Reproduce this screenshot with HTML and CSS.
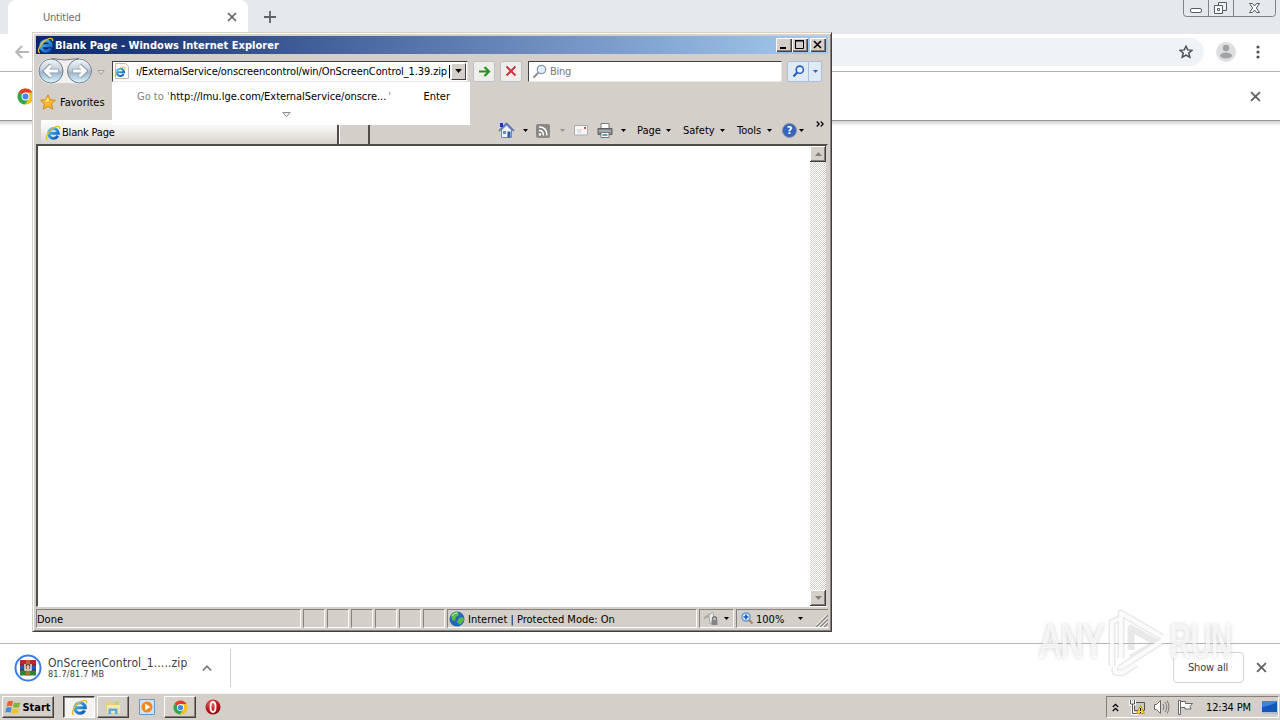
FILE: index.html
```
<!DOCTYPE html>
<html lang="en">
<head>
<meta charset="UTF-8">
<meta name="viewport" content="width=device-width, initial-scale=1.0">
<title>Untitled</title>
<link rel="stylesheet" href="styles.css">
</head>
<body>
<svg class="defs" width="0" height="0">
  <defs>
    <linearGradient id="blue" x1="0" y1="0" x2="1" y2="1">
      <stop offset="0" stop-color="#58c8f8"/><stop offset="1" stop-color="#0a51b4"/>
    </linearGradient>
    <linearGradient id="orb" x1="0" y1="0" x2="0" y2="1">
      <stop offset="0" stop-color="#f4f7fa"/><stop offset=".45" stop-color="#c2d0de"/><stop offset=".55" stop-color="#9db6cc"/><stop offset="1" stop-color="#d8f6ff"/>
    </linearGradient>
    <radialGradient id="red" cx=".4" cy=".3" r=".8">
      <stop offset="0" stop-color="#f0645c"/><stop offset=".6" stop-color="#b8141a"/><stop offset="1" stop-color="#6e0808"/>
    </radialGradient>
    <symbol id="ie" viewBox="0 0 16 16">
      <path d="M12.800 10.800A4.900 4.900 0 1 1 13.400 8.300H5" fill="none" stroke="url(#blue)" stroke-width="2.900"/>
      <path d="M2.800 15C-.6 14 2.600 6.800 8 3.200c4-2.600 7.400-2.600 6.600.8" fill="none" stroke="#e9b824" stroke-width="1.300"/>
    </symbol>
    <symbol id="chrome" viewBox="0 0 16 16">
      <circle cx="8" cy="8" r="7.500" fill="#fbc116"/>
      <path d="M8 8L1.500 4.300A7.500 7.500 0 0 1 14.500 4.300H8z" fill="#e33b2e"/>
      <path d="M8 8L1.500 4.300A7.500 7.500 0 0 0 7.300 15.500L11.200 9.800z" fill="#2da94f"/>
      <circle cx="8" cy="8" r="3.700" fill="#fff"/><circle cx="8" cy="8" r="2.800" fill="#4285f4"/>
    </symbol>
    <symbol id="close" viewBox="0 0 10 10">
      <path d="M1 1l8 8M9 1L1 9" stroke="#5f6368" stroke-width="1.700"/>
    </symbol>
    <symbol id="down" viewBox="0 0 5 3"><path d="M0 0h5L2.500 3z" fill="currentColor"/></symbol>
  </defs>
</svg>

<div class="desktop">
  <div class="chrome">
    <div class="tabstrip">
      <div class="chrome-tab">
        <span class="tab-title">Untitled</span>
        <svg width="10" height="10"><use href="#close"/></svg>
      </div>
      <svg class="new-tab" width="12" height="12" viewBox="0 0 12 12"><path d="M6 0v12M0 6h12" stroke="#5f6368" stroke-width="1.800"/></svg>
      <svg class="win-buttons" width="94" height="18" viewBox="0 0 94 18">
        <path d="M.5 0V13.500Q.5 16.500 3.500 16.500H89.500Q92.500 16.500 92.500 13.500V0M25.500 0V16.500M50.500 0V16.500" fill="none" stroke="#7e8489"/>
        <rect x="7.500" y="8.500" width="11" height="4" rx="1.500" fill="#fff" stroke="#555b62"/>
        <path d="M35.500 2.500h8v8h-8z" fill="#eef0f2" stroke="#555b62"/>
        <path d="M31.500 5.500h8v8h-8zM34.500 8.500h2v2h-2z" fill="#fff" stroke="#555b62"/>
        <path d="M66.500 3.500h3l2 2.500 2-2.500h3l-3.200 4.500 3.200 4.500h-3l-2-2.500-2 2.500h-3l3.200-4.500z" fill="#fff" stroke="#555b62"/>
      </svg>
    </div>
    <div class="toolbar">
      <svg class="back" width="14" height="14" viewBox="0 0 14 14"><path d="M14 7H1.500M7 1L1.200 7 7 13" fill="none" stroke="#b4b6b8" stroke-width="1.900"/></svg>
      <div class="omnibox">
        <svg width="14" height="14" viewBox="0 0 14 14"><path d="M7 1.200l1.700 3.700 4.300.4-3.200 2.700 1 4.200L7 10.200l-3.800 2 1-4.200L1 5.300l4.300-.4z" fill="none" stroke="#4c5055" stroke-width="1.500"/></svg>
      </div>
      <svg class="avatar" width="20" height="20" viewBox="0 0 20 20"><circle cx="10" cy="10" r="10" fill="#dedfe1"/><circle cx="10" cy="6" r="3.200" fill="#a1a2a4"/><ellipse cx="10" cy="13.500" rx="6" ry="3" fill="#a1a2a4"/></svg>
      <svg class="dots" width="4" height="14" viewBox="0 0 4 14" fill="#505459"><circle cx="2" cy="2" r="1.600"/><circle cx="2" cy="7" r="1.600"/><circle cx="2" cy="12" r="1.600"/></svg>
    </div>
    <div class="infobar">
      <svg width="17" height="17"><use href="#chrome"/></svg>
      <svg width="11" height="11"><use href="#close"/></svg>
    </div>
    <div class="page"></div>
    <div class="shelf">
      <svg class="rar" width="28" height="28" viewBox="0 0 28 28">
        <circle cx="14" cy="14" r="12.500" fill="#fff" stroke="#3b7ae8" stroke-width="2"/>
        <path d="M6 6h16v5H6z" fill="#c22336"/><path d="M6 11.500h16v4.500H6z" fill="#2f51b8"/><path d="M6 16.500h16v5H6z" fill="#298534"/>
        <path d="M12 6h4v15.500h-4z" fill="#b36b2c"/><path d="M6 11.200h16M6 16.200h16" stroke="#222"/>
        <path d="M11 10v6h6v-6M14 11v4" fill="none" stroke="#eee" stroke-width="1.400"/>
      </svg>
      <div class="download">
        <div class="file">OnScreenControl_1.....zip</div>
        <div class="size">81.7/81.7 MB</div>
      </div>
      <svg class="chevron" width="10" height="6" viewBox="0 0 10 6"><path d="M.8 5.500L5 1.200l4.200 4.300" fill="none" stroke="#73777b" stroke-width="1.600"/></svg>
      <div class="divider"></div>
      <button class="show-all"><span>Show all</span></button>
      <svg class="shelf-close" width="11" height="11"><use href="#close"/></svg>
    </div>
  </div>

  <div class="taskbar">
    <div class="start">
      <svg width="17" height="17" viewBox="0 0 16 16">
        <path d="M2.500 2.500q3-1.500 5 0L6.500 7q-2.500-1.500-5 0z" fill="#e8602c"/><path d="M8.500 3q3 1.500 6 0l-1.300 4.500q-3 1.500-5.700 0z" fill="#7db83a"/>
        <path d="M1.200 8.200q3-1.500 5 0l-1 4.800q-2.500-1.500-5 0z" fill="#3e8ed8"/><path d="M7.200 8.700q3 1.500 6 0L12 13.200q-3 1.500-6 0z" fill="#f4c02a"/>
      </svg>
      <b>Start</b>
    </div>
    <div class="task active"><svg width="17" height="17"><use href="#ie"/></svg></div>
    <div class="task">
      <svg width="16" height="16" viewBox="0 0 16 16"><path d="M1 3h5l1 1h7v9H1z" fill="#e9cf72"/><path d="M2 6h13v8H2z" fill="#f7e9a6"/><path d="M3.500 15V9.500h9V15h-2.500v-3H6v3z" fill="#58aee0"/><path d="M10 2h4v4h-4z" fill="#b9d47c"/></svg>
    </div>
    <div class="quick media">
      <svg width="16" height="16" viewBox="0 0 16 16"><path d="M.5.5h15v15H.5z" fill="#cfe3f6" stroke="#5a9bd8"/><circle cx="8" cy="8" r="5.500" fill="#f08a1c"/><path d="M6.200 4.800v6.400L11.400 8z" fill="#fff"/></svg>
    </div>
    <div class="task last"><svg width="15" height="15"><use href="#chrome"/></svg></div>
    <div class="quick">
      <svg width="16" height="16" viewBox="0 0 16 16"><circle cx="8" cy="8" r="7.500" fill="url(#red)"/><ellipse cx="8" cy="8" rx="2.500" ry="5" fill="none" stroke="#fff" stroke-width="1.800"/></svg>
    </div>
    <div class="tray">
      <svg width="7" height="9" viewBox="0 0 7 9"><path d="M.8 4l2.700-2.700L6.200 4M.8 8l2.700-2.700L6.200 8" fill="none" stroke="#000" stroke-width="1.300"/></svg>
      <svg class="net" width="16" height="16" viewBox="0 0 16 16"><path d="M5.500 3.500h10v8h-10z" fill="#c8c8c4" stroke="#555"/><path d="M1.500 1v4h4V1M3.500 5v9.500h6" fill="none" stroke="#fff" stroke-width="3"/><path d="M1.500 1v4h4V1M3.500 5v9.500h5" fill="none" stroke="#555"/><path d="M11.500 6.500l4 8h-8z" fill="#ffe21c" stroke="#b89a00"/><path d="M11.500 9v3M11.500 13v1" stroke="#000"/></svg>
      <svg class="sound" width="17" height="16" viewBox="0 0 17 16"><path d="M1.500 5.500h2l4-4v13l-4-4h-2z" fill="#fff" stroke="#666"/><path d="M10 5q2 3 0 6M12 3q3.500 5 0 10M14 1.500q4 6.500 0 13" fill="none" stroke="#777"/></svg>
      <svg class="flag" width="17" height="16" viewBox="0 0 17 16"><path d="M1.500 1.500h2v14h-2zM3.500 2.500h5v2h7l-2.500 3 1 2.500h-6v-1.500h-4.500z" fill="#fff" stroke="#666"/></svg>
      <span class="clock">12:34 PM</span>
      <svg class="show-desk" width="16" height="13" viewBox="0 0 16 13"><path d="M0 0h15v11H0z" fill="#1857b5"/><path d="M0 6Q8 5 15 1V0H0z" fill="#3c83dc"/><path d="M0 12h16" stroke="#8faed6"/></svg>
    </div>
  </div>

  <div class="ie-window">
    <div class="titlebar">
      <svg width="17" height="17"><use href="#ie"/></svg>
      <b>Blank Page - Windows Internet Explorer</b>
      <div class="caption-buttons">
        <svg width="16" height="14" viewBox="0 0 16 14"><path d="M4 10h6" stroke="#000" stroke-width="2"/></svg>
        <svg width="16" height="14" viewBox="0 0 16 14"><path d="M3.500 3h8v7.500h-8zM3 2.500h9" fill="none" stroke="#000"/></svg>
        <svg class="x" width="16" height="14" viewBox="0 0 16 14"><path d="M4 3l7 7M11 3l-7 7" stroke="#000" stroke-width="1.600"/></svg>
      </div>
    </div>

    <div class="navbar">
      <svg class="nav-orbs" width="56" height="29" viewBox="0 0 56 29">
        <path d="M14 1q14 4 28 0a13 13 0 0 1 0 26q-14-2-28 0a13 13 0 0 1 0-26z" fill="#f1f0ee"/><path d="M14 1.500q14 3 28 0" fill="none" stroke="#777d86"/>
        <circle cx="14" cy="14" r="12" fill="url(#orb)" stroke="#737f8b"/><circle cx="42.500" cy="14" r="12" fill="url(#orb)" stroke="#737f8b"/>
        <path d="M21.500 14H8.500M14 8l-6 6 6 6M35.500 14h13M42.500 8l6 6-6 6" fill="none" stroke="#8797a6" stroke-width="4.400"/>
        <path d="M21 14H8.500M14 8.500L8.500 14l5.500 5.500M36 14h12M42.500 8.500L48 14l-5.500 5.500" fill="none" stroke="#fff" stroke-width="3"/>
      </svg>
      <svg class="recent" width="8" height="5" viewBox="0 0 8 5"><path d="M.8.5h6.400L4 4.300z" fill="#ddd" stroke="#a5a19b"/></svg>
      <div class="address">
        <svg width="16" height="16" viewBox="0 0 16 16"><path d="M1.500.5h10l3 3v12h-13z" fill="#fff" stroke="#bcbcbc"/><use href="#ie" x="0" y="3" width="12" height="12"/></svg>
        <div class="url"><span>ı/ExternalService/onscreencontrol/win/OnScreenControl_1.39.zip</span></div>
        <div class="drop"><svg width="7" height="4"><use href="#down"/></svg></div>
      </div>
      <div class="nav-button"><svg width="13" height="11" viewBox="0 0 13 11"><path d="M1 5.500h10M6.500 1l4.500 4.500L6.500 10" fill="none" stroke="#22941f" stroke-width="2.200"/></svg></div>
      <div class="nav-button"><svg width="12" height="12" viewBox="0 0 12 12"><path d="M1.500 1.500l9 9M10.500 1.500l-9 9" stroke="#c43a44" stroke-width="2"/></svg></div>
      <div class="search">
        <svg width="15" height="15" viewBox="0 0 15 15"><circle cx="9.500" cy="5.500" r="4.200" fill="#e4f1fa" stroke="#8a99a8" stroke-width="1.300"/><path d="M6.300 8.700L1.500 13.500" stroke="#8a8f95" stroke-width="2"/></svg>
        <span>Bing</span>
      </div>
      <div class="search-go">
        <div><svg width="13" height="13" viewBox="0 0 13 13"><circle cx="7.800" cy="4.700" r="3.600" fill="#e9f3ff" stroke="#2560c8" stroke-width="1.600"/><path d="M5.300 7.300L1.500 11.500" stroke="#2560c8" stroke-width="2.200"/></svg></div>
        <div class="go-more"><svg width="5" height="3"><use href="#down"/></svg></div>
      </div>
    </div>

    <div class="favbar">
      <svg width="16" height="16" viewBox="0 0 16 16"><path d="M8 .8l2.200 4.900 5.200.5-3.900 3.600 1.200 5.300L8 12.400l-4.700 2.700 1.200-5.300L.6 6.200l5.200-.5z" fill="#fbb92d" stroke="#d08a1a"/><path d="M8 3l1.200 4L5 8z" fill="#ffe58c"/></svg>
      <span>Favorites</span>
    </div>

    <div class="tabbar">
      <div class="ie-tab">
        <svg width="16" height="16"><use href="#ie"/></svg>
        <span>Blank Page</span>
      </div>
      <div class="ie-newtab"></div>
      <div class="commands">
        <svg class="home" width="17" height="17" viewBox="0 0 17 17"><path d="M3.500 8v7.500h10V8l-5-5z" fill="#edf2fb" stroke="#7288b8"/><path d="M1 9l7.500-7.500L16 9" fill="none" stroke="#5572b4" stroke-width="1.600"/><path d="M2 1h3v4H2z" fill="#2432b4"/><path d="M9.500 9.500h3v6h-3z" fill="#2e5a9f"/><path d="M5 9h3v3H5z" fill="#6b8acb"/></svg>
        <svg class="arrow a1" width="5" height="3"><use href="#down"/></svg>
        <svg class="rss" width="14" height="14" viewBox="0 0 14 14"><rect width="14" height="14" rx="2" fill="#8b8885"/><circle cx="4" cy="10.500" r="1.300" fill="#fff"/><path d="M3 6.500q4.500 0 4.500 5M3 3q8 0 8 8.500" fill="none" stroke="#fff" stroke-width="1.500"/></svg>
        <svg class="arrow a2" width="5" height="3"><use href="#down"/></svg>
        <svg class="mail" width="14" height="11" viewBox="0 0 14 11"><path d="M.5.5h13v9.500H.5z" fill="#f8f8f8" stroke="#aaa"/><path d="M3 5h5M3 7h4" stroke="#ccc"/><path d="M10 2h2v2h-2z" fill="#d84848"/></svg>
        <svg class="print" width="16" height="15" viewBox="0 0 16 15"><path d="M4 .5h8V6H4z" fill="#fff" stroke="#777"/><path d="M1 5.500h14v6H1z" fill="#85878c" stroke="#5e6064"/><path d="M2 8h12" stroke="#ccc"/><path d="M4 9.500h8v5H4z" fill="#fff" stroke="#777"/><path d="M5.500 12h5" stroke="#50a5c8" stroke-width="2"/></svg>
        <svg class="arrow a3" width="5" height="3"><use href="#down"/></svg>
        <span class="m-page">Page</span><svg class="arrow a4" width="5" height="3"><use href="#down"/></svg>
        <span class="m-safety">Safety</span><svg class="arrow a4" width="5" height="3"><use href="#down"/></svg>
        <span class="m-tools">Tools</span><svg class="arrow a4" width="5" height="3"><use href="#down"/></svg>
        <div class="help">?</div><svg class="arrow" width="5" height="3"><use href="#down"/></svg>
        <svg class="more" width="8" height="6" viewBox="0 0 8 6"><path d="M.7.5L3.200 3 .7 5.500M4.700.5L7.200 3 4.700 5.500" fill="none" stroke="#000" stroke-width="1.200"/></svg>
      </div>
    </div>

    <div class="viewport">
      <div class="scrollbar">
        <div class="scroll-btn"><svg width="7" height="4" viewBox="0 0 7 4"><path d="M0 4h7L3.500 0z" fill="#85817a"/></svg></div>
        <div class="scroll-btn"><svg width="7" height="4" viewBox="0 0 7 4"><path d="M0 0h7L3.500 4z" fill="#85817a"/></svg></div>
      </div>
    </div>

    <div class="statusbar">
      <div class="pane done"><span>Done</span></div>
      <div class="pane"></div><div class="pane"></div><div class="pane"></div><div class="pane"></div><div class="pane"></div><div class="pane"></div>
      <div class="pane zone">
        <svg width="16" height="16" viewBox="0 0 16 16"><circle cx="8" cy="8" r="7.500" fill="#2367b8"/><path d="M2 4q3-4 7-3l1 3-3 2-1 4-3-1zM10 7l4-1 1 3-4 5-3-3z" fill="#58b848"/><path d="M3 5q2-3 5-3" fill="none" stroke="#c8ecff"/></svg>
        <span>Internet | Protected Mode: On</span>
      </div>
      <div class="pane lock">
        <svg width="17" height="16" viewBox="0 0 17 16"><path d="M1 8l2-3 4 1M3 7q4-7 8-2" fill="none" stroke="#aaa6a0" stroke-width="1.500"/><path d="M6 4l4-3 1 9-4 3z" fill="#eee" stroke="#aaa"/><path d="M9.500 9V7q2-2.500 4 0v2" fill="none" stroke="#777" stroke-width="1.300"/><path d="M8.500 9h6v5h-6z" fill="#858585"/></svg>
        <svg class="arrow" width="5" height="3"><use href="#down"/></svg>
      </div>
      <div class="pane zoom">
        <svg width="13" height="13" viewBox="0 0 13 13"><path d="M7.500 7.500l4 4" stroke="#b08a5c" stroke-width="2.400"/><circle cx="5" cy="5" r="4.200" fill="#d8ecff" stroke="#5b8fd0" stroke-width="1.200"/><path d="M5 2.500v5M2.500 5h5" stroke="#1c56b4" stroke-width="1.600"/></svg>
        <span>100%</span>
        <svg class="arrow" width="5" height="3"><use href="#down"/></svg>
        <svg class="grip" width="12" height="12" viewBox="0 0 12 12"><path d="M0 12L12 0M4 12l8-8M8 12l4-4" stroke="#84807a" stroke-width="1.500"/><path d="M-1.500 12L12-1.500M2.500 12l9.500-9.500M6.500 12L12 6.500" stroke="#fff"/></svg>
      </div>
    </div>

    <div class="suggest">
      <div class="suggest-row">
        <span class="goto">Go to '</span><span class="target">http://lmu.lge.com/ExternalService/onscre...</span><span class="quote">'</span>
        <span class="enter">Enter</span>
      </div>
      <svg width="9" height="6" viewBox="0 0 9 6"><path d="M.8.5h7.400L4.500 4.800z" fill="#eee" stroke="#8e8e8e"/></svg>
    </div>
  </div>

  <svg class="watermark" width="210" height="76" viewBox="0 0 210 76">
    <g class="mark-text">
      <text x="8" y="51" textLength="64" lengthAdjust="spacingAndGlyphs">ANY</text>
      <text x="138" y="51" textLength="62" lengthAdjust="spacingAndGlyphs">RUN</text>
    </g>
    <path class="mark-edge" d="M80 60V16l7-3M89 52V7l41 24M88 62l42-27M99 44V22l26 15-26 15M83 61v5l7 1 14-9"/>
    <path class="mark-line" d="M80 60V16l7-3M89 52V7l41 24M88 62l42-27M83 61v5l7 1 14-9"/>
  </svg>
</div>
</body>
</html>
```
FILE: styles.css
```
* {
  box-sizing: border-box;
}
body {
  margin: 0;
  overflow: hidden;
  font-family: "DejaVu Sans Condensed", "DejaVu Sans", sans-serif;
  font-stretch: condensed;
  font-size: 11px;
  color: #000;
}
svg {
  display: block;
  flex: none;
}
span, b {
  white-space: nowrap;
}
.defs {
  position: absolute;
}
.desktop {
  position: relative;
  width: 1280px;
  height: 720px;
  display: flex;
  flex-direction: column;
}

/* browser behind */
.chrome {
  flex: 1;
  display: flex;
  flex-direction: column;
  background: #fff;
}
.tabstrip {
  height: 34px;
  display: flex;
  background: #e6e9ec;
  padding-left: 8px;
}
.chrome-tab {
  width: 240px;
  display: flex;
  align-items: center;
  justify-content: space-between;
  padding: 0 11px 0 35px;
  background: #fff;
  border-radius: 8px 8px 0 0;
}
.tab-title {
  color: #6a6d70;
  letter-spacing: -0.2px;
}
.new-tab {
  margin: 11px 0 0 16px;
}
.win-buttons {
  margin: 0 3px 0 auto;
}
.toolbar {
  height: 38px;
  display: flex;
  align-items: center;
  padding: 0 20px 2px 15px;
  border-bottom: 1px solid #b1b2b4;
}
.omnibox {
  flex: 1;
  height: 28px;
  display: flex;
  align-items: center;
  justify-content: flex-end;
  margin-left: 80px;
  padding-right: 11px;
  background: #f0f3f6;
  border-radius: 14px;
}
.avatar {
  margin: 0 20px 0 12px;
}
.infobar {
  height: 49px;
  display: flex;
  align-items: center;
  justify-content: space-between;
  padding: 0 19px 0 17px;
  border-bottom: 1px solid #96979a;
}
.page {
  flex: 1;
  background: linear-gradient(#cfcfcf, #fff 5px);
}
.shelf {
  height: 50px;
  display: flex;
  align-items: center;
  padding: 0 13px 2px 14px;
  border-top: 1px solid #b4b4b4;
}
.download {
  width: 140px;
  margin-left: 6px;
  color: #3c4043;
}
.file {
  font-size: 12px;
  line-height: 13px;
  letter-spacing: 0.12px;
}
.size {
  font-size: 9px;
  line-height: 9px;
  letter-spacing: 0.2px;
}
.chevron {
  margin-left: 14px;
}
.divider {
  width: 1px;
  height: 38px;
  margin-left: 18px;
  background: #d0d0d0;
}
.show-all {
  width: 71px;
  height: 31px;
  margin-left: auto;
  padding: 0 1px 0 0;
  background: #fff;
  border: 1px solid #d4d4d4;
  border-radius: 4px;
  font: inherit;
  letter-spacing: -0.15px;
  color: #3c4043;
}
.shelf-close {
  margin-left: 12px;
}

/* taskbar */
.taskbar {
  height: 27px;
  display: flex;
  padding: 3px 1px 2px 2px;
  background: #d4cfc8;
  box-shadow: inset 0 1px #f8f7f5;
}
.start, .task {
  height: 22px;
  display: flex;
  align-items: center;
  justify-content: center;
  border: 1px solid;
  border-color: #fff #404040 #404040 #fff;
  box-shadow: inset -1px -1px #85817a;
}
.start {
  width: 52px;
  margin-right: 9px;
}
.task {
  width: 32px;
  margin-right: 2px;
}
.task.active {
  background: #f5f4f2;
  border-color: #404040 #fff #fff #404040;
  box-shadow: inset 1px 1px #85817a;
}
.quick {
  padding-top: 3px;
}
.quick.media {
  margin: 0 9px 0 8px;
}
.task.last {
  margin-right: 9px;
}
.tray {
  width: 173px;
  display: flex;
  align-items: center;
  margin-left: auto;
  padding-left: 5px;
  border: 1px solid;
  border-color: #85817a #fff #fff #85817a;
}
.net {
  margin-left: 10px;
}
.sound {
  margin-left: 8px;
}
.flag {
  margin-left: 7px;
}
.clock {
  margin-left: 12px;
  letter-spacing: -0.15px;
}
.show-desk {
  margin-left: auto;
}

/* explorer window */
.ie-window {
  position: absolute;
  left: 32px;
  top: 32px;
  width: 800px;
  height: 600px;
  padding: 3px;
  display: flex;
  flex-direction: column;
  background: #d4cfc8;
  border: 1px solid;
  border-color: #d4cfc8 #404040 #404040 #d4cfc8;
  box-shadow: inset 1px 1px #fff, inset -1px -1px #85817a;
}
.titlebar {
  height: 18px;
  display: flex;
  align-items: center;
  padding: 0 2px 0 1px;
  background: linear-gradient(90deg, #0b256b, #a6caf0);
  color: #fff;
}
.titlebar b {
  margin-left: 1px;
  letter-spacing: 0.03px;
}
.caption-buttons {
  display: flex;
  margin-left: auto;
}
.caption-buttons svg {
  background: #d4cfc8;
  box-shadow: inset 1px 1px #fff, inset -1px -1px #404040, inset -2px -2px #85817a;
}
.caption-buttons .x {
  margin-left: 2px;
}
.navbar {
  height: 34px;
  display: flex;
  align-items: center;
  padding-left: 1px;
}
.recent {
  margin: 2px 0 0 4px;
}
.address {
  width: 356px;
  height: 21px;
  display: flex;
  align-items: center;
  margin-left: 7px;
  padding: 1px 1px 1px 1px;
  background: #fff;
  border: 1px solid;
  border-color: #404040 #e8e6e2 #e8e6e2 #404040;
}
.url {
  width: 316px;
  margin: 0 1px 0 6px;
  border-right: 1px solid #000;
  letter-spacing: -0.12px;
}
.drop {
  width: 15px;
  height: 17px;
  display: flex;
  align-items: center;
  justify-content: center;
  background: #d4cfc8;
  border: 1px solid;
  border-color: #fff #404040 #404040 #fff;
}
.nav-button {
  width: 22px;
  height: 21px;
  display: flex;
  align-items: center;
  justify-content: center;
  margin-left: 5px;
  background: #f0eeeb;
  border: 1px solid #b9c1cb;
  border-radius: 2px;
}
.search {
  width: 254px;
  height: 21px;
  display: flex;
  align-items: center;
  margin-left: 6px;
  padding-left: 3px;
  gap: 3px;
  background: #fff;
  border: 1px solid;
  border-color: #404040 #e8e6e2 #e8e6e2 #404040;
  color: #777;
}
.search span {
  letter-spacing: -0.3px;
}
.search-go {
  display: flex;
  height: 21px;
  margin-left: 5px;
  background: #e0eaf7;
  border: 1px solid #a9bfdc;
  border-radius: 2px;
  color: #2460b8;
}
.search-go div {
  width: 20px;
  display: flex;
  align-items: center;
  justify-content: center;
}
.search-go .go-more {
  width: 13px;
  border-left: 1px solid #a9bfdc;
}
.favbar {
  height: 28px;
  display: flex;
  align-items: center;
  padding-left: 4px;
  gap: 4px;
}
.tabbar {
  height: 29px;
  display: flex;
  align-items: flex-end;
  padding-left: 5px;
}
.ie-tab {
  width: 298px;
  height: 25px;
  display: flex;
  align-items: center;
  padding-left: 4px;
  gap: 1px;
  background: linear-gradient(#fff, #f2f0ed 40%, #d4cfc8);
  border-right: 2px solid #504d49;
}
.ie-tab span {
  letter-spacing: -0.2px;
}
.ie-newtab {
  width: 31px;
  height: 20px;
  border-left: 1px solid #fff;
  border-right: 2px solid #504d49;
}
.commands {
  flex: 1;
  height: 29px;
  display: flex;
  align-items: center;
  padding-left: 128px;
}
.arrow.a1 {
  margin: 0 8px;
}
.arrow.a2 {
  margin: 0 9px 0 10px;
  color: #969089;
}
.print {
  margin-left: 9px;
}
.arrow.a3 {
  margin: 0 11px 0 8px;
}
.m-page {
  width: 29px;
}
.m-safety {
  width: 37px;
}
.m-tools {
  width: 30px;
}
.arrow.a4 {
  margin-right: 12px;
}
.m-tools + .arrow.a4 {
  margin-right: 10px;
}
.help {
  width: 15px;
  height: 15px;
  margin-right: 2px;
  background: #3563bd;
  border: 1px solid #8793a9;
  border-radius: 50%;
  color: #fff;
  font-weight: bold;
  line-height: 13px;
  text-align: center;
}
.more {
  margin: 0 0 14px 12px;
}
.viewport {
  flex: 1;
  display: flex;
  justify-content: flex-end;
  margin-top: -1px;
  background: #fff;
  border: solid;
  border-width: 2px 2px 1px 2px;
  border-color: #504d49 #d4cfc8 #fff #504d49;
}
.scrollbar {
  width: 16px;
  display: flex;
  flex-direction: column;
  justify-content: space-between;
  background: repeating-conic-gradient(#d4cfc8 0 25%, #fff 0 50%) 0 0 / 2px 2px;
}
.scroll-btn {
  height: 16px;
  display: flex;
  align-items: center;
  justify-content: center;
  background: #d4cfc8;
  box-shadow: inset -1px -1px #404040, inset 1px 1px #fff, inset -2px -2px #85817a;
}
.statusbar {
  height: 21px;
  display: flex;
  gap: 2px;
  padding-top: 2px;
}
.pane {
  width: 22px;
  display: flex;
  align-items: center;
  border: 1px solid;
  border-color: #85817a #fff #fff #85817a;
}
.pane span {
  padding-top: 1px;
}
.pane.done {
  width: 265px;
}
.pane.zone {
  width: 250px;
  padding-left: 1px;
  gap: 3px;
}
.pane.lock {
  width: 35px;
  padding-left: 3px;
  gap: 4px;
}
.pane.zoom {
  flex: 1;
  padding-left: 4px;
  border-right: 0;
}
.pane.zoom span {
  width: 42px;
  margin-left: 2px;
}
.grip {
  margin: 5px 0 0 auto;
}

/* address suggestions */
.suggest {
  position: absolute;
  left: 79px;
  top: 49px;
  width: 358px;
  height: 43px;
  background: #fff;
}
.suggest-row {
  display: flex;
  align-items: center;
  height: 28px;
  padding: 0 20px 0 25px;
}
.goto {
  width: 33px;
  color: #808080;
}
.target {
  letter-spacing: -0.04px;
}
.quote {
  margin-left: 2px;
  color: #808080;
}
.enter {
  margin-left: auto;
}
.suggest > svg {
  margin: 2px auto 0 170px;
}

.watermark {
  position: absolute;
  left: 1032px;
  top: 606px;
}
.mark-text {
  font-family: "Liberation Sans Narrow", "Liberation Sans", sans-serif;
  font-size: 46px;
  fill: #fff;
  fill-opacity: .6;
  stroke: #fff;
  stroke-opacity: .6;
  stroke-width: 1.5px;
  filter: drop-shadow(0 0 2px #bbb);
}
.mark-edge, .mark-line {
  fill: none;
  stroke: #c8c8c8;
  stroke-opacity: .4;
  stroke-width: 7px;
  stroke-linejoin: round;
}
.mark-line {
  stroke: #fff;
  stroke-opacity: .8;
  stroke-width: 4px;
}
```
